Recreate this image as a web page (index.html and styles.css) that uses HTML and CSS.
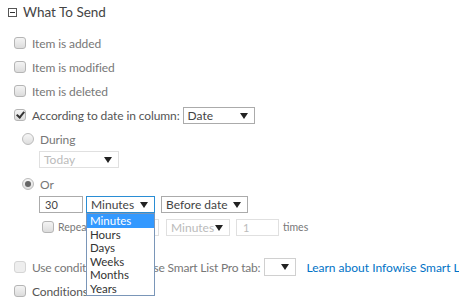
FILE: index.html
```html
<!DOCTYPE html>
<html lang="en-us">
<head>
<title>What To Send</title>
<meta charset="utf-8" />
<link rel="stylesheet" href="styles.css">
</head>
<body>
<div class="section">
  <div class="section-head">
    <span class="toggle"></span>
    <span class="title">What To Send</span>
  </div>

  <div class="row"><span class="cb"></span><span class="label">Item is added</span></div>
  <div class="row"><span class="cb"></span><span class="label">Item is modified</span></div>
  <div class="row"><span class="cb"></span><span class="label">Item is deleted</span></div>
  <div class="row">
    <span class="cb checked"></span><span class="label dark">According to date in column:</span>
    <span class="select sel-date">Date<span class="arrow"></span></span>
  </div>

  <div class="sub">
    <div class="row radio-row"><span class="rb"></span><span class="label">During</span></div>
    <div class="field-row">
      <span class="select sel-today disabled">Today<span class="arrow"></span></span>
    </div>
    <div class="row radio-row"><span class="rb on"></span><span class="label">Or</span></div>
    <div class="field-row">
      <span class="input in-num">30</span>
      <span class="select sel-unit focus">Minutes<span class="arrow"></span>
        <ul class="dropdown">
          <li class="hl">Minutes</li>
          <li>Hours</li>
          <li>Days</li>
          <li>Weeks</li>
          <li>Months</li>
          <li>Years</li>
        </ul>
      </span>
      <span class="select sel-when">Before date<span class="arrow"></span></span>
    </div>
    <div class="repeat-row">
      <span class="cb"></span><span class="small rep-label">Repeat every</span>
      <span class="input in-every disabled"></span>
      <span class="select sel-rep disabled">Minutes<span class="arrow"></span></span>
      <span class="input in-times disabled">1</span>
      <span class="small">times</span>
    </div>
  </div>

  <div class="row cond-row">
    <span class="cb disabled"></span><span class="label cond-label">Use conditions in Infowise Smart List Pro tab:</span>
    <span class="select sel-tab"><span class="arrow"></span></span>
    <a class="link" href="#">Learn about Infowise Smart List Pro</a>
  </div>
  <div class="row"><span class="cb"></span><span class="label dark">Conditions</span></div>
</div>
</body>
</html>
```

FILE: styles.css
```css
body {
  margin: 0;
  background-color: white;
  font-family: Lato, "Open Sans", sans-serif;
  color: #777;
  overflow: hidden;
}

.section {
  padding-left: 14px;
  white-space: nowrap;
}

.section-head {
  display: flex;
  align-items: center;
  height: 24px;
  margin-left: -6px;
  margin-bottom: 7px;
}

.toggle {
  position: relative;
  width: 7px;
  height: 7px;
  border: 1px solid #555;
  margin-right: 6px;
}

.toggle::after {
  content: "";
  position: absolute;
  left: 1px;
  top: 3px;
  width: 5px;
  height: 1px;
  background: #333;
}

.title {
  font-size: 13.5px;
  color: #444;
}

.row {
  display: flex;
  align-items: center;
  height: 24px;
}

.label {
  font-size: 12px;
  letter-spacing: -0.1px;
  margin-left: 6px;
}

.dark {
  color: #555;
}

.cb {
  position: relative;
  box-sizing: border-box;
  width: 12px;
  height: 12px;
  border: 1px solid #b5b5b5;
  border-radius: 3px;
  background: linear-gradient(#f4f4f4, #dcdcdc);
  flex: none;
}

.cb.disabled {
  border-color: #d5d5d5;
  background: #eee;
}

.cb.checked::after {
  content: "";
  position: absolute;
  left: 3px;
  top: 0;
  width: 3px;
  height: 6px;
  border: solid #333;
  border-width: 0 2px 2px 0;
  transform: rotate(40deg);
}

.rb {
  position: relative;
  box-sizing: border-box;
  width: 12px;
  height: 12px;
  border: 1px solid #bbb;
  border-radius: 50%;
  background: linear-gradient(#f6f6f6, #dedede);
  flex: none;
}

.rb.on::after {
  content: "";
  position: absolute;
  left: 2px;
  top: 2px;
  width: 6px;
  height: 6px;
  border-radius: 50%;
  background: #666;
}

.sub {
  padding-left: 8px;
}

.radio-row {
  height: 24px;
}

.field-row {
  display: flex;
  align-items: center;
  padding-left: 17px;
  margin-bottom: 4px;
}

.select, .input {
  position: relative;
  box-sizing: border-box;
  display: inline-block;
  flex: none;
  height: 17px;
  line-height: 15px;
  border: 1px solid #ababab;
  font-size: 12px;
  color: #444;
  padding-left: 4px;
  background: white;
}

.arrow {
  position: absolute;
  right: 6px;
  top: 5px;
  border-left: 4px solid transparent;
  border-right: 4px solid transparent;
  border-top: 6px solid #222;
}

.disabled {
  border-color: #e0e0e0;
  color: #bbb;
}

.sel-date {
  width: 72px;
  margin-left: 3px;
}

.sel-today {
  width: 80px;
}

.in-num {
  width: 44px;
  font-size: 11px;
  padding-left: 5px;
}

.sel-unit {
  width: 69px;
  margin-left: 3px;
}

.focus {
  border-color: #2a8dd4;
}

.sel-when {
  width: 87px;
  margin-left: 6px;
}

.dropdown {
  position: absolute;
  left: -1px;
  top: 16px;
  width: 67px;
  margin: 0;
  padding: 0;
  list-style: none;
  background: white;
  border: 1px solid #7a96b8;
  font-size: 11.5px;
  line-height: 13.5px;
  color: #333;
  z-index: 2;
}

.dropdown li {
  padding-left: 3px;
}

.dropdown .hl {
  background: #3399ff;
  color: white;
}

.repeat-row {
  display: flex;
  align-items: center;
  height: 20px;
  padding-left: 20px;
  margin-top: 3px;
}

.small {
  font-size: 10.5px;
  margin-left: 4px;
}

.rep-label {
  width: 58px;
}

.in-every {
  width: 40px;
  margin-left: 3px;
}

.sel-rep {
  width: 64px;
  margin-left: 7px;
}

.in-times {
  width: 43px;
  margin-left: 6px;
  font-size: 11px;
  padding-left: 6px;
}

.cond-row {
  margin-top: 18px;
  height: 24px;
}

.cond-label {
  letter-spacing: -0.2px;
}

.sel-tab {
  width: 32px;
  height: 18px;
  margin-left: 4px;
  border-color: #d0d0d0;
}

.link {
  margin-left: 10px;
  font-size: 12px;
  color: #0072c6;
  text-decoration: none;
}
```
